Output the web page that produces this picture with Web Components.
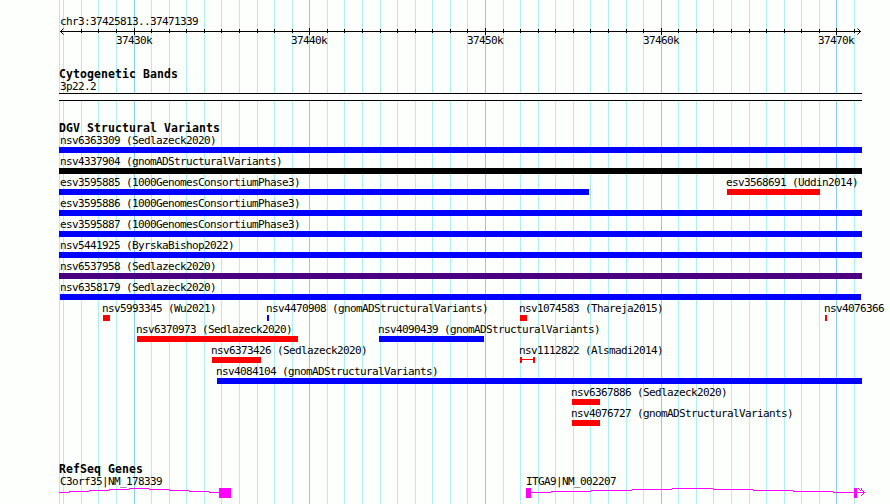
<!DOCTYPE html>
<html lang="en">
<head>
<meta charset="utf-8">
<title>chr3:37425813..37471339</title>
<style>
  body {
    margin: 0;
    background: #fdfffc;
    color: #000;
    font: 11px/13px "DejaVu Sans Mono", "Liberation Mono", monospace;
    letter-spacing: -0.622px;
    overflow: hidden;
  }
</style>
</head>
<body>
<genome-browser>
  <scale-ruler label="chr3:37425813..37471339"></scale-ruler>
  <browser-track name="Cytogenetic Bands">
    <cyto-band>3p22.2</cyto-band>
  </browser-track>
  <browser-track name="DGV Structural Variants" style="margin-top:20px">
    <track-row><sv-feature start="59" end="862">nsv6363309 (Sedlazeck2020)</sv-feature></track-row>
    <track-row><sv-feature start="59" end="862" color="#000">nsv4337904 (gnomADStructuralVariants)</sv-feature></track-row>
    <track-row>
      <sv-feature start="59" end="589">esv3595885 (1000GenomesConsortiumPhase3)</sv-feature>
      <sv-feature start="727" end="820" color="#f00">esv3568691 (Uddin2014)</sv-feature>
    </track-row>
    <track-row><sv-feature start="59" end="862">esv3595886 (1000GenomesConsortiumPhase3)</sv-feature></track-row>
    <track-row><sv-feature start="59" end="862">esv3595887 (1000GenomesConsortiumPhase3)</sv-feature></track-row>
    <track-row><sv-feature start="59" end="862">nsv5441925 (ByrskaBishop2022)</sv-feature></track-row>
    <track-row><sv-feature start="59" end="862" color="#4b0082">nsv6537958 (Sedlazeck2020)</sv-feature></track-row>
    <track-row><sv-feature start="60" end="861">nsv6358179 (Sedlazeck2020)</sv-feature></track-row>
    <track-row>
      <sv-feature start="103" end="110" color="#f00">nsv5993345 (Wu2021)</sv-feature>
      <sv-feature start="267" end="269">nsv4470908 (gnomADStructuralVariants)</sv-feature>
      <sv-feature start="520" end="527" color="#f00">nsv1074583 (Thareja2015)</sv-feature>
      <sv-feature start="825" end="827" color="#f00">nsv4076366</sv-feature>
    </track-row>
    <track-row>
      <sv-feature start="137" end="298" color="#f00">nsv6370973 (Sedlazeck2020)</sv-feature>
      <sv-feature start="379" end="484">nsv4090439 (gnomADStructuralVariants)</sv-feature>
    </track-row>
    <track-row>
      <sv-feature start="212" end="261" color="#f00">nsv6373426 (Sedlazeck2020)</sv-feature>
      <sv-feature start="520" end="535" color="#f00" shape="span">nsv1112822 (Alsmadi2014)</sv-feature>
    </track-row>
    <track-row><sv-feature start="217" end="862">nsv4084104 (gnomADStructuralVariants)</sv-feature></track-row>
    <track-row><sv-feature start="572" end="600" color="#f00">nsv6367886 (Sedlazeck2020)</sv-feature></track-row>
    <track-row><sv-feature start="572" end="600" color="#f00">nsv4076727 (gnomADStructuralVariants)</sv-feature></track-row>
  </browser-track>
  <browser-track name="RefSeq Genes" style="margin-top:36px">
    <track-row>
      <gene-model start="59" exons="219-231"
        intron="M59 4.5h10m0-1h20m0-1h20m0-1h20m0-1h20m0 1h20m0 1h20m0 1h20m0 1h10">C3orf35|NM_178339</gene-model>
      <gene-model start="526" exons="526-531 854-857" arrow
        intron="M531 4.5h20m0-1h40m0-1h41m0-1h40m0-1h41m0 1h40m0 1h40m0 1h40m0 1h32">ITGA9|NM_002207</gene-model>
    </track-row>
  </browser-track>
</genome-browser>

<script>
// panel geometry, in pixels
const LEFT = 59;
const RIGHT = 862;
const MAJOR = [134, 309, 485, 661, 836];
const MINOR = [
  63, 81, 98, 116, 151, 169, 186, 204, 221, 239, 257, 274, 292,
  327, 344, 362, 380, 397, 415, 432, 450, 467, 503, 520, 538, 555,
  573, 590, 608, 626, 643, 678, 696, 713, 731, 749, 766, 784, 801, 819, 854
];

const vlines = (list, y1, y2) => list.map(x => `M${x + 0.5} ${y1}V${y2}`).join('');

class GenomeBrowser extends HTMLElement {
  constructor() {
    super();
    this.attachShadow({ mode: 'open' });
    this.shadowRoot.innerHTML = `
      <style>
        :host { display: block; position: relative; width: 890px; height: 504px; overflow: hidden; }
        .grid { position: absolute; inset: 0; }
        .tracks { position: relative; display: flex; flex-direction: column; }
        path { fill: none; shape-rendering: crispEdges; }
      </style>
      <svg class="grid" width="890" height="504">
        <path stroke="#afeeee" d="${vlines([LEFT, ...MINOR], 0, 504)}"/>
        <path stroke="#87ceeb" d="${vlines(MAJOR, 0, 504)}"/>
      </svg>
      <div class="tracks"><slot></slot></div>
    `;
  }
}

class ScaleRuler extends HTMLElement {
  constructor() {
    super();
    this.attachShadow({ mode: 'open' });
    const names = MAJOR.map((x, i) => `<span style="margin-left:${x - 18}px">${37430 + i * 10}k</span>`).join('');
    this.shadowRoot.innerHTML = `
      <style>
        :host { display: block; height: 67px; padding-top: 15px; box-sizing: border-box; }
        .label { margin-left: 60px; height: 13px; }
        svg { display: block; }
        path { fill: none; stroke: #000; shape-rendering: crispEdges; }
        .names { display: grid; margin-top: -1px; }
        .names span { grid-area: 1 / 1; white-space: nowrap; }
      </style>
      <div class="label">${this.getAttribute('label')}</div>
      <svg width="890" height="7">
        <path d="M60 3.5H861${vlines(MINOR.slice(1), 1, 5)}${vlines(MAJOR, 0, 7)}"/>
        <path style="shape-rendering:auto" d="M63.5 .5L60.5 3.5L63.5 6.5M857.5 .5L860.5 3.5L857.5 6.5"/>
      </svg>
      <div class="names">${names}</div>
    `;
  }
}

class BrowserTrack extends HTMLElement {
  constructor() {
    super();
    this.attachShadow({ mode: 'open' });
    this.shadowRoot.innerHTML = `
      <style>
        :host { display: block; }
        .name {
          height: 11px;
          padding-top: 1px;
          box-sizing: border-box;
          margin-left: 59px;
          font-size: 11.5px;
          font-weight: bold;
          letter-spacing: 0.077px;
          white-space: nowrap;
        }
      </style>
      <div class="name">${this.getAttribute('name')}</div>
      <slot></slot>
    `;
  }
}

class CytoBand extends HTMLElement {
  constructor() {
    super();
    this.attachShadow({ mode: 'open' });
    this.shadowRoot.innerHTML = `
      <style>
        :host { display: block; }
        .label { margin-left: 60px; height: 13px; padding: 2px 0 0; }
        .band {
          width: ${RIGHT - LEFT}px;
          height: 8px;
          margin-left: ${LEFT}px;
          box-sizing: border-box;
          background: #fff;
          border: solid #000;
          border-width: 1px 0;
        }
      </style>
      <div class="label"><slot></slot></div>
      <div class="band"></div>
    `;
  }
}

class TrackRow extends HTMLElement {
  constructor() {
    super();
    this.attachShadow({ mode: 'open' });
    this.shadowRoot.innerHTML = `
      <style>
        :host { display: grid; height: 21px; }
        ::slotted(*) { grid-area: 1 / 1; }
      </style>
      <slot></slot>
    `;
  }
}

class SvFeature extends HTMLElement {
  constructor() {
    super();
    this.attachShadow({ mode: 'open' });
    const start = Number(this.getAttribute('start'));
    const width = Number(this.getAttribute('end')) - start;
    const color = this.getAttribute('color') || '#00f';
    const isSpan = this.getAttribute('shape') === 'span';
    // labels never start left of the panel padding
    const indent = Math.max(start - 1, LEFT + 1) - start;
    this.shadowRoot.innerHTML = `
      <style>
        :host { display: block; margin-left: ${start}px; white-space: nowrap; }
        .label { height: 13px; padding-top: 2px; margin-left: ${indent}px; }
        .bar { width: ${width}px; height: 6px; background: ${color}; }
        .span {
          width: ${width}px;
          height: 6px;
          box-sizing: border-box;
          border: solid ${color};
          border-width: 0 2px;
          background: linear-gradient(${color}, ${color}) 0 2px / 100% 1px no-repeat;
        }
      </style>
      <div class="label"><slot></slot></div>
      <div class="${isSpan ? 'span' : 'bar'}"></div>
    `;
  }
}

class GeneModel extends HTMLElement {
  constructor() {
    super();
    this.attachShadow({ mode: 'open' });
    const start = Number(this.getAttribute('start'));
    const exons = this.getAttribute('exons').split(' ').map(e => {
      const [a, b] = e.split('-').map(Number);
      return `<rect x="${a}" y="0" width="${b - a}" height="10"/>`;
    }).join('');
    // strand arrow past the last exon
    const arrow = this.hasAttribute('arrow')
      ? '<path d="M861 1.5h1m0 1h1m0 1h1m-1 2h1m-2 1h1m-2 1h1M858 .5h1m0 1h1m0 1h1m0-2h1"/>'
      : '';
    this.shadowRoot.innerHTML = `
      <style>
        :host { display: block; white-space: nowrap; }
        .label { height: 13px; padding-top: 2px; margin-left: ${start === LEFT ? start + 1 : start}px; }
        svg { display: block; shape-rendering: crispEdges; }
        path { fill: none; stroke: #f0f; }
        rect { fill: #f0f; }
      </style>
      <div class="label"><slot></slot></div>
      <svg width="890" height="10"><path d="${this.getAttribute('intron')}"/>${exons}${arrow}</svg>
    `;
  }
}

customElements.define('genome-browser', GenomeBrowser);
customElements.define('scale-ruler', ScaleRuler);
customElements.define('browser-track', BrowserTrack);
customElements.define('cyto-band', CytoBand);
customElements.define('track-row', TrackRow);
customElements.define('sv-feature', SvFeature);
customElements.define('gene-model', GeneModel);
</script>
</body>
</html>
